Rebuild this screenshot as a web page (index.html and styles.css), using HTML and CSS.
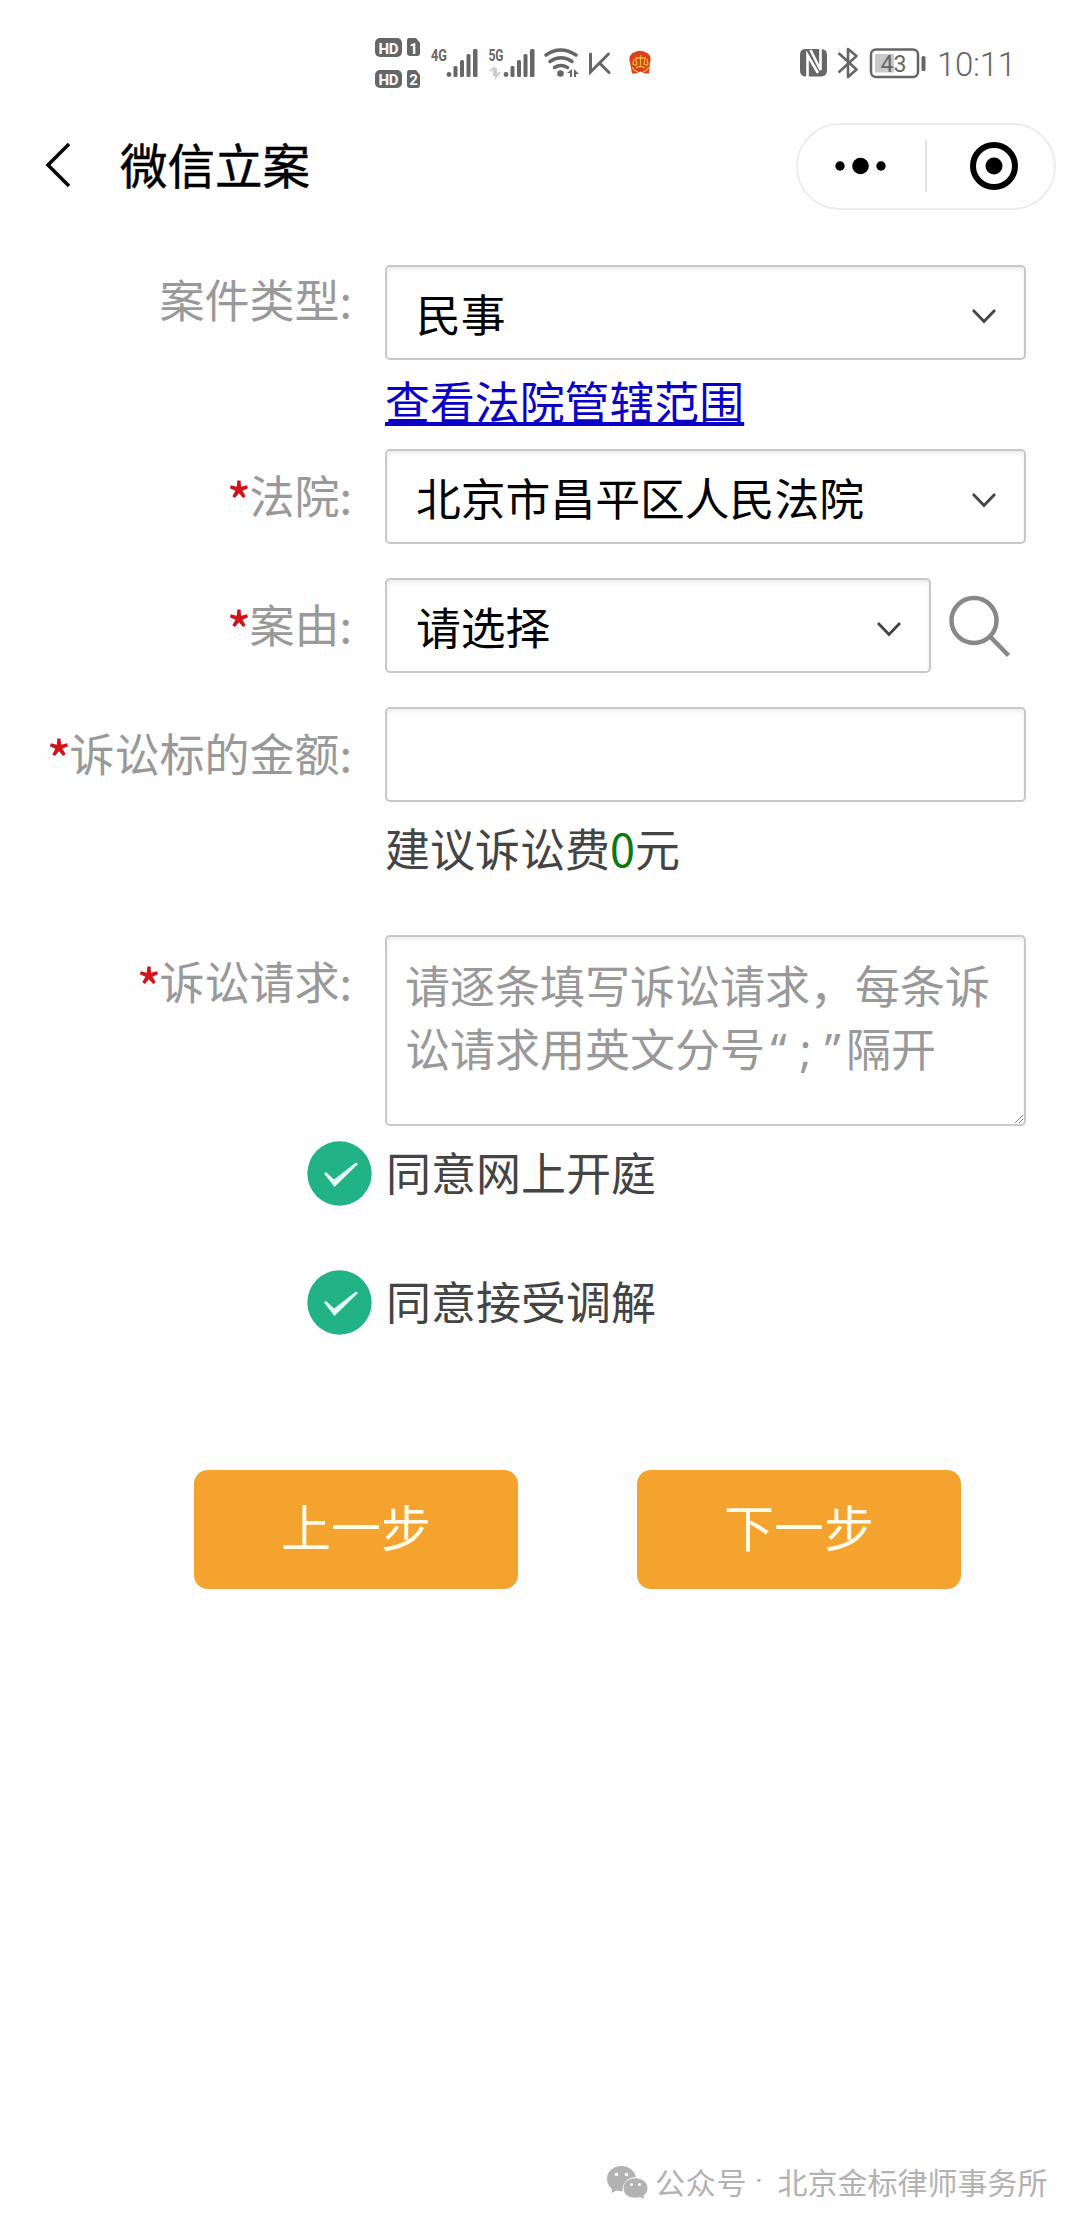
FILE: index.html
```html
<!DOCTYPE html>
<html lang="zh-CN">
<head>
<meta charset="utf-8">
<title>微信立案</title>
<link rel="stylesheet" href="styles.css">
</head>
<body>
<div class="screen">
  <header class="status">
    <svg class="status-left" width="290" height="60" viewBox="370 35 290 60">
      <g fill="#666">
        <rect x="375" y="38" width="27" height="19" rx="5"/>
        <path d="M409 38h7l4 5v10q0 3-3 3h-7q-3 0-3-3V41q0-3 2-3z"/>
        <rect x="375" y="70" width="27" height="18" rx="5"/>
        <path d="M409 70h7l4 5v10q0 3-3 3h-7q-3 0-3-3V73q0-3 2-3z"/>
        <circle cx="449" cy="74.500" r="2.400"/>
        <rect x="453.500" y="66" width="4" height="11" rx="1.500"/>
        <rect x="460" y="60" width="4" height="17" rx="1.500"/>
        <rect x="466.500" y="54" width="4" height="23" rx="1.500"/>
        <rect x="473" y="49" width="4.500" height="28" rx="1.500"/>
        <circle cx="506" cy="74.500" r="2.400"/>
        <rect x="510.500" y="66" width="4" height="11" rx="1.500"/>
        <rect x="517" y="60" width="4" height="17" rx="1.500"/>
        <rect x="523.500" y="54" width="4" height="23" rx="1.500"/>
        <rect x="530" y="49" width="4.500" height="28" rx="1.500"/>
        <circle cx="560.500" cy="73.500" r="3.300"/>
        <path d="M567 73l5-4v8h-2v-4zM574 69l5 5h-3v3h-2z"/>
      </g>
      <path d="M490 71l4-3v8M496 68v9l4-5" fill="none" stroke="#ccc" stroke-width="2"/>
      <g fill="none" stroke="#666" stroke-linecap="round">
        <path d="M546 55q14.500-10 30 0M550 61.500q11-7.500 22 0M554.500 67.500q6.500-4 13 0" stroke-width="3.500"/>
        <path d="M590.500 54v18l18-18M600 63.500l9 9" stroke-width="3"/>
      </g>
      <g class="tiny-bold" fill="#fff" text-anchor="middle">
        <text x="388.500" y="53.500" textLength="20">HD</text><text x="413.500" y="53.500">1</text>
        <text x="388.500" y="85" textLength="20">HD</text><text x="413.500" y="85">2</text>
      </g>
      <g class="tiny-net" fill="#666">
        <text x="431" y="61" textLength="16" lengthAdjust="spacingAndGlyphs">4G</text>
        <text x="488.500" y="61" textLength="15" lengthAdjust="spacingAndGlyphs">5G</text>
      </g>
      <path d="M632 53.500q8-5.500 16 0 4 4 2 9l-1 11h-4l-4.500-2-4.500 2h-4l-2-11q-2-5 2-9z" fill="#d8401a"/>
      <path d="M640.500 55v12M635 58h11M634 59l-1 5q3 2 4 0l-1-5M645 59l-1 5q3 2 4 0l-1-5M636 68q4-3 9 0M632 67q2 4 6 5M649 67q-2 4-6 5" fill="none" stroke="#f6b63a" stroke-width="1.300"/>
    </svg>
    <svg class="status-right" width="240" height="60" viewBox="790 35 240 60">
      <path d="M805 49h16q6 0 6 6v15q0 6.500-6 6.500h-15q-6 0-6-6V55q0-6 5-6z" fill="#666"/>
      <path d="M807.500 77V55l10.500 18M810.500 50l10 20V49" fill="none" stroke="#fff" stroke-width="2.600"/>
      <path d="M838.500 53l18 16.500-8.500 7.500V49l8.500 7-18 16.500" fill="none" stroke="#666" stroke-width="2.600" stroke-linejoin="round"/>
      <rect x="871" y="49.500" width="47" height="27.500" rx="5" fill="none" stroke="#666" stroke-width="2.500"/>
      <rect x="875" y="54" width="19" height="18.500" fill="#c9c9c9"/>
      <rect x="921.500" y="56" width="4" height="15" rx="1.500" fill="#666"/>
      <text class="battery" x="880.500" y="72" fill="#666" textLength="26" lengthAdjust="spacingAndGlyphs">43</text>
      <text class="clock" x="937" y="75.500" fill="#666" textLength="79">10:11</text>
    </svg>
  </header>

  <nav class="nav">
    <svg class="back" width="30" height="50" viewBox="0 0 30 50"><path d="M26 4L5 25l21 21" fill="none" stroke="#000" stroke-width="3.500"/></svg>
    <h1 class="title">微信立案</h1>
    <div class="capsule">
      <svg width="54" height="20" viewBox="0 0 54 20"><circle cx="6" cy="10" r="4.700"/><circle cx="26.500" cy="10" r="8.300"/><circle cx="47" cy="10" r="4.700"/></svg>
      <span class="divider"></span>
      <svg width="50" height="50" viewBox="0 0 50 50"><circle cx="25" cy="25" r="21" fill="none" stroke="#000" stroke-width="6"/><circle cx="25" cy="25" r="8.500"/></svg>
    </div>
  </nav>

  <main class="form">
    <div class="row row-type">
      <div class="label label-high">案件类型:</div>
      <div class="field">
        <div class="box">民事<svg class="chev" width="26" height="16" viewBox="0 0 26 16"><path d="M2 2l11 11.500L24 2"/></svg></div>
        <a class="link">查看法院管辖范围</a>
      </div>
    </div>
    <div class="row">
      <div class="label"><b class="req">*</b>法院:</div>
      <div class="field"><div class="box">北京市昌平区人民法院<svg class="chev" width="26" height="16" viewBox="0 0 26 16"><path d="M2 2l11 11.500L24 2"/></svg></div></div>
    </div>
    <div class="row">
      <div class="label"><b class="req">*</b>案由:</div>
      <div class="field field-search">
        <div class="box">请选择<svg class="chev" width="26" height="16" viewBox="0 0 26 16"><path d="M2 2l11 11.500L24 2"/></svg></div>
        <svg class="search" width="64" height="64" viewBox="0 0 64 64"><circle cx="26" cy="26.500" r="22.500" fill="none" stroke="#888" stroke-width="4.500"/><path d="M42.500 43l18 18.500" stroke="#888" stroke-width="4.500"/></svg>
      </div>
    </div>
    <div class="row row-amount">
      <div class="label"><b class="req">*</b>诉讼标的金额:</div>
      <div class="field">
        <div class="box"></div>
        <p class="fee">建议诉讼费<span class="zero">0</span>元</p>
      </div>
    </div>
    <div class="row row-claim">
      <div class="label"><b class="req">*</b>诉讼请求:</div>
      <div class="field">
        <div class="area">请逐条填写诉讼请求，每条诉<br>讼请求用英文分号<span class="mark">“</span><span class="mark">;</span><span class="mark">”</span>隔开<svg class="grip" width="8" height="8" viewBox="0 0 8 8"><path d="M0 8l8-8M4 8l4-4" stroke="#888"/></svg></div>
      </div>
    </div>
    <div class="agree">
      <svg width="65" height="65" viewBox="0 0 65 65"><circle cx="32.500" cy="32.500" r="32.200" fill="#21b286"/><path d="M17 32.500l2-1.500 8 7.500L49 21.500l2 1.500-23.500 23z" fill="#e4fff5"/></svg>
      <span>同意网上开庭</span>
    </div>
    <div class="agree">
      <svg width="65" height="65" viewBox="0 0 65 65"><circle cx="32.500" cy="32.500" r="32.200" fill="#21b286"/><path d="M17 32.500l2-1.500 8 7.500L49 21.500l2 1.500-23.500 23z" fill="#e4fff5"/></svg>
      <span>同意接受调解</span>
    </div>
    <div class="actions">
      <div class="btn">上一步</div>
      <div class="btn">下一步</div>
    </div>
  </main>

  <footer class="account">
    <svg width="41" height="34" viewBox="0 0 41 34">
      <path d="M14.500 0C6 0 0 5.500 0 13c0 4 2 7.500 5 10l-.500 4 5-2.500c2 .600 4 .800 6 .700C15 16 22 11 29 11 27 4 21.500 0 14.500 0z" fill="#b2b2b2"/>
      <path d="M28.500 12.200c7 0 12 4.300 12 10 0 3.200-1.500 5.800-4 7.500l.500 3.300-4-2c-9 2.500-16.500-2-16.500-8.800 0-5.700 5-10 12-10z" fill="#b2b2b2"/>
      <g fill="#fff"><circle cx="9.500" cy="8.500" r="1.800"/><circle cx="19.500" cy="8.500" r="1.800"/><circle cx="24.500" cy="18.500" r="1.500"/><circle cx="32.500" cy="18.500" r="1.500"/></g>
    </svg>
    <span class="kind">公众号</span><span class="dot">·</span><span>北京金标律师事务所</span>
  </footer>
</div>
</body>
</html>
```
FILE: styles.css
```css
* { box-sizing: border-box; }

body {
  margin: 0;
  background: #fefefe;
  font-family: "Noto Sans CJK SC", sans-serif;
}

.screen {
  width: 1080px;
  height: 2228px;
  display: flex;
  flex-direction: column;
}

svg { display: block; flex: none; }

/* status bar */
.status {
  display: flex;
  justify-content: space-between;
  height: 116px;
  padding: 35px 50px 0 370px;
}
.tiny-bold { font: bold 15px Roboto, sans-serif; }
.tiny-net { font: bold 17px Roboto, sans-serif; }
.battery { font: 24px Roboto, sans-serif; }
.clock { font: 300 33px Roboto, sans-serif; }

/* title bar */
.nav {
  display: flex;
  align-items: center;
  height: 100px;
  padding: 0 24px 0 43px;
}
.back { margin-bottom: 2px; }
.title {
  margin: 0 auto 4px 47px;
  font-size: 47.5px;
  font-weight: 400;
  line-height: 60px;
  -webkit-text-stroke: .5px #000;
}
.capsule {
  display: flex;
  align-items: center;
  width: 260px;
  height: 87px;
  padding: 0 0 0 36px;
  border: 2px solid #ededed;
  border-radius: 44px;
}
.divider {
  width: 2px;
  height: 52px;
  margin: 0 42px 0 37px;
  background: #e2e2e2;
}

/* form */
.form {
  padding: 49px 54px 0 0;
  font-size: 45px;
  line-height: 60px;
}
.row {
  display: grid;
  grid-template-columns: 352px 641px;
  column-gap: 33px;
  margin-bottom: 34px;
}
.row-type { margin-bottom: 18px; }
.label {
  padding-top: 16px;
  text-align: right;
  white-space: nowrap;
  color: #999;
}
.label-high { padding-top: 4px; }
.req {
  display: inline-block;
  font-weight: 500;
  line-height: 50px;
  color: #d4121a;
  transform: translateY(4px) scale(1.1);
}
.box, .area {
  flex: 1;
  border: 2px solid #c8c8c8;
  border-radius: 5px;
  background: #fff;
  box-shadow: inset 0 3px 4px rgba(0, 0, 0, .07);
}
.box {
  display: flex;
  align-items: center;
  justify-content: space-between;
  height: 95px;
  padding: 0 27px 0 29px;
  font-size: 44.8px;
  color: #000;
}
.chev { margin-top: 6px; fill: none; stroke: #444; stroke-width: 2.8; }
.link {
  display: block;
  margin-top: 11px;
  font-size: 44.9px;
  line-height: 60px;
  color: #0b00c8;
  text-decoration: underline;
  text-decoration-thickness: 3.5px;
  text-underline-offset: 2px;
  text-decoration-skip-ink: none;
}
.field-search { display: flex; }
.search { margin: 16px 14px 0 17px; }
.row-amount { margin-bottom: 57px; }
.fee { margin: 16px 0 0; color: #444; }
.zero { color: #0a780a; }
.row-claim { margin-bottom: 15px; }
.area {
  position: relative;
  height: 191px;
  padding: 16px 18px;
  line-height: 63px;
  color: #999;
  white-space: nowrap;
}
.mark {
  display: inline-block;
  width: 27px;
  text-align: center;
  font-family: "Noto Sans", "Open Sans", sans-serif;
  line-height: 60px;
}
.grip { position: absolute; right: 1px; bottom: 1px; }
.agree {
  display: flex;
  align-items: center;
  gap: 14px;
  height: 65px;
  margin: 0 0 64px 307px;
  color: #444;
}
.agree span { margin-bottom: 4px; }
.actions {
  display: flex;
  gap: 119px;
  margin: 135px 0 0 194px;
}
.btn {
  width: 324px;
  height: 119px;
  border-radius: 14px;
  background: #f5a32f;
  color: #fffbe8;
  font-size: 50px;
  line-height: 111px;
  text-align: center;
}

/* account line */
.account {
  display: flex;
  align-items: center;
  margin: auto 32px 24px 607px;
  font-size: 30px;
  line-height: 40px;
  color: #b2b2b2;
  white-space: nowrap;
}
.account span { margin-bottom: 3px; }
.account .kind { margin-left: 7px; letter-spacing: .8px; }
.account .dot {
  width: 30px;
  padding-right: 7px;
  text-align: center;
  font-family: Roboto, sans-serif;
}
```
